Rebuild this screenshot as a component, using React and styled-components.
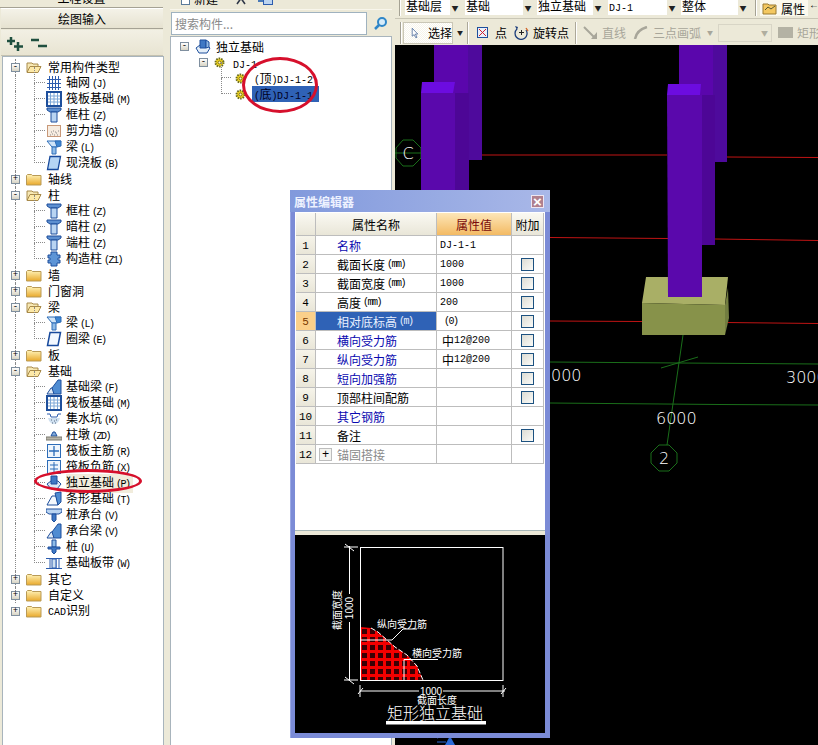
import React from "react";
import styled, { createGlobalStyle } from "styled-components";

const GlobalStyle = createGlobalStyle`
  html, body { margin: 0; padding: 0; background: #ece9d8; }
  body { font-family: "Noto Sans CJK SC", "Liberation Sans", sans-serif; font-size: 12px; color: #000; }
`;

const Page = styled.div`
  position: relative;
  display: flex;
  width: 818px;
  height: 745px;
  overflow: hidden;
  background: #ece9d8;
`;

const Mono = styled.span`
  font-family: "Liberation Mono", monospace;
  font-size: 10px;
`;

// bracketed codes like (M) are squeezed tighter than other latin in the original
const Tight = styled(Mono)`
  letter-spacing: -1.5px;
  margin-left: ${(p) => p.$ml ?? 2}px;
  margin-right: 1px;
`;

const Txt = ({ children }) =>
  children.split(/(\s*\([A-Za-z0-9]*\)|[\x00-\x7f]+)/).map((part, i) => {
    if (/^\s*\(/.test(part)) return <Tight key={i}>{part.trim()}</Tight>;
    if (/^[\x00-\x7f]+$/.test(part)) return <Mono key={i}>{part}</Mono>;
    return part;
  });

/* ---------- left panel ---------- */

const LeftPanel = styled.div`
  display: flex;
  flex-direction: column;
  width: 164px;
  margin-right: 6px;
  flex: none;
`;

const StubButton = styled.div`
  height: 8px;
  box-sizing: border-box;
  margin-right: 1px;
  overflow: hidden;
  display: flex;
  justify-content: center;
  align-items: flex-end;
  background: #ece9d8;
  border-bottom: 1px solid #a5a294;
  line-height: 12px;
`;

const StubText = styled.span`
  margin-bottom: 3px;
`;

const NavButton = styled.div`
  height: 21px;
  box-sizing: border-box;
  margin: 0 1px;
  display: flex;
  align-items: center;
  justify-content: center;
  background: linear-gradient(#f4f2e8, #e6e2d0);
  border-top: 1px solid #fff;
  border-bottom: 1px solid #a5a294;
`;

const IconBar = styled.div`
  height: 26px;
  box-sizing: border-box;
  margin: 1px 1px 0 1px;
  display: flex;
  align-items: center;
  gap: 7px;
  padding: 2px 0 0 5px;
  background: linear-gradient(#f2f0e4, #e8e4d2);
  border-bottom: 1px solid #c4c1b0;
`;

const TreeBox = styled.div`
  flex: 1;
  margin-left: 2px;
  padding-top: 2px;
  background: #fff;
  border: 1px solid #a8b4bc;
  border-bottom: none;
`;

const TreeRow = styled.div`
  position: relative;
  height: 16px;
  display: flex;
  align-items: center;
  line-height: 16px;
  white-space: nowrap;
  padding-left: ${(p) => (p.$child ? 43 : 8)}px;

  &::before {
    content: "";
    display: ${(p) => (p.$last ? "none" : "block")};
    position: absolute;
    left: 12px;
    top: 0;
    height: 16px;
    border-left: 1px dotted #8a8a8a;
  }
  &::after {
    content: "";
    display: ${(p) => (p.$child ? "block" : "none")};
    position: absolute;
    left: 31px;
    top: -8px;
    width: 10px;
    height: 15px;
    border-left: 1px dotted #8a8a8a;
    border-bottom: 1px dotted #8a8a8a;
  }
`;

const Expander = styled.span`
  position: relative;
  z-index: 1;
  flex: none;
  width: 9px;
  height: 9px;
  box-sizing: border-box;
  border: 1px solid #7f8f9f;
  background: linear-gradient(#fff, #d8d4c4);
  margin-right: 6px;
  display: flex;
  align-items: center;
  justify-content: center;
  font: 9px/7px "Liberation Mono", monospace;
  color: #000;
`;

const RowLabel = styled.span`
  margin-left: ${(p) => p.$gap || 4}px;
  padding-right: 2px;
  background: ${(p) => (p.$hot ? "#f1ecdc" : "transparent")};
`;

const Folder = ({ open }) => (
  <svg width="16" height="13" viewBox="0 0 16 13" style={{ flex: "none" }}>
    <defs>
      <linearGradient id="fd" x1="0" y1="0" x2="0" y2="1">
        <stop offset="0" stopColor="#fff3b8" />
        <stop offset="1" stopColor="#e9a92c" />
      </linearGradient>
    </defs>
    {open ? (
      <>
        <path d="M1 11V2h5l1 1h5v2" fill="#f7e8b4" stroke="#a88a4a" />
        <path d="M1 11.5L4 5.5h11l-3 6z" fill="#fde9a8" stroke="#a88a4a" />
      </>
    ) : (
      <path d="M.5 12V2.5l1-1h4l1 1h8.500v9.500z" fill="url(#fd)" stroke="#b99a56" />
    )}
  </svg>
);

const paths = {
  grid: (
    <g stroke="#2c5cae" fill="none">
      <path d="M3.500 1v14M6.500 1v14M9.500 1v14M12.500 1v14M1 4.500h14M1 8.500h14M1 12.500h14" />
    </g>
  ),
  raft: (
    <g fill="none" stroke="#1e4f9c">
      <rect x="1" y="1" width="14" height="14" strokeWidth="2" />
      <path d="M4.500 2v12M8 2v12M11.500 2v12M2 5h12M2 8h12M2 11h12" stroke="#7fa8d8" />
    </g>
  ),
  col: (
    <g stroke="#1e4f9c">
      <path d="M1 1h14v2l-3 2H4L1 3z" fill="#5d8fd0" />
      <path d="M5 5h6v10H5z" fill="#b9d4f2" />
    </g>
  ),
  wall: (
    <g>
      <rect x="1.500" y="2.500" width="13" height="11" fill="#f7ece0" stroke="#c89878" />
      <path d="M4 12h1M6 11h1M8 12h1M10 10h1M5 9h1M7 8h1M9 9h1M11 12h1M12 8h1" stroke="#8a8a8a" />
    </g>
  ),
  beam: (
    <g stroke="#2c6cb8">
      <path d="M1 2h14l-4 6H6z" fill="#cfe4f8" />
      <path d="M6 8h4v7H6z" fill="#8fbce8" />
      <path d="M9 2l6 0v5l-4 1z" fill="#3f86d0" />
    </g>
  ),
  slab: <path d="M4 1.500h10.500L12 14.500H1.500z" fill="#b5d4f4" stroke="#17499c" strokeWidth="1.300" />,
  ring: <path d="M4 1.500h10.500L12 14.500H1.500z" fill="#f2f8ff" stroke="#17499c" strokeWidth="1.500" />,
  cons: (
    <path
      d="M5 1h6v3h3v3h-2v2h2v3h-3v3H5v-3H2V9h2V7H2V4h3z"
      fill="#5d94d6"
      stroke="#1e4f9c"
    />
  ),
  fbeam: (
    <g stroke="#1e4f9c">
      <path d="M1 15l4-6h3v6z" fill="#dfeaf6" />
      <path d="M6 9l6-8h3v14H8z" fill="#4f8cd2" />
    </g>
  ),
  pit: (
    <g>
      <path d="M1 3l3 0 1 3h6l1-3 3 0" fill="none" stroke="#2c5cae" />
      <path d="M2 7c2 8 10 8 12 0z" fill="#cfe0f0" />
      <path d="M5 9h1M8 10h1M10 9h1M6 12h1M9 12h1" stroke="#5a6a80" />
    </g>
  ),
  pier: (
    <g>
      <path d="M5 9l2-4h2l2 4z" fill="#7fa8d8" stroke="#1e4f9c" />
      <rect x="0" y="10" width="16" height="3" fill="#b8b4a8" stroke="#7a7a70" />
    </g>
  ),
  main: (
    <g fill="none" stroke="#2c6cb8">
      <rect x="1.500" y="1.500" width="13" height="13" fill="#eef5fc" />
      <path d="M8 3v10M3 8h10" strokeWidth="1.300" />
    </g>
  ),
  neg: (
    <g fill="none" stroke="#2c6cb8">
      <rect x="1.500" y="1.500" width="13" height="13" fill="#eef5fc" />
      <path d="M8 3v10M4 6h8M4 10h8" />
    </g>
  ),
  iso: (
    <g stroke="#1e4f9c">
      <path d="M1 9l4-3h7l3 3-4 5H5z" fill="#dbe8f6" />
      <path d="M5 1h6v8H5z" fill="#3f78c4" />
    </g>
  ),
  strip: (
    <g stroke="#1e4f9c">
      <path d="M1 14l5-9h4l2 9z" fill="#f4f8fc" />
      <path d="M9 2l6-1v10l-3 3z" fill="#4f8cd2" />
    </g>
  ),
  cap: (
    <g stroke="#1e4f9c">
      <path d="M0 2h16v3l-3 2H3L0 5z" fill="#b9d4f2" />
      <path d="M6 7h4v6l-2 2-2-2z" fill="#3f78c4" />
    </g>
  ),
  pile: (
    <g stroke="#1e4f9c">
      <path d="M6 1h4v7H6z" fill="#8fbce8" />
      <path d="M2 8h12v2H10v3l-2 2-2-2v-3H2z" fill="#3f78c4" />
    </g>
  ),
  band: (
    <g stroke="#2c5cae" fill="none">
      <path d="M0 3.500h16M0 13.500h16" />
      <path d="M4 4v9M7 4v9M10 4v9M13 4v9" />
      <rect x="6" y="4" width="4" height="9" fill="#cfe0f0" />
    </g>
  ),
};

const CompIcon = ({ kind }) => (
  <svg width="16" height="16" viewBox="0 0 16 16" style={{ flex: "none" }}>
    {paths[kind]}
  </svg>
);

const tree = [
  { t: "常用构件类型", open: true },
  { t: "轴网 (J)", k: "grid" },
  { t: "筏板基础 (M)", k: "raft" },
  { t: "框柱 (Z)", k: "col" },
  { t: "剪力墙 (Q)", k: "wall" },
  { t: "梁 (L)", k: "beam" },
  { t: "现浇板 (B)", k: "slab" },
  { t: "轴线" },
  { t: "柱", open: true },
  { t: "框柱 (Z)", k: "col" },
  { t: "暗柱 (Z)", k: "col" },
  { t: "端柱 (Z)", k: "col" },
  { t: "构造柱 (Z1)", k: "cons" },
  { t: "墙" },
  { t: "门窗洞" },
  { t: "梁", open: true },
  { t: "梁 (L)", k: "beam" },
  { t: "圈梁 (E)", k: "ring" },
  { t: "板" },
  { t: "基础", open: true },
  { t: "基础梁 (F)", k: "fbeam" },
  { t: "筏板基础 (M)", k: "raft" },
  { t: "集水坑 (K)", k: "pit" },
  { t: "柱墩 (ZD)", k: "pier" },
  { t: "筏板主筋 (R)", k: "main" },
  { t: "筏板负筋 (X)", k: "neg" },
  { t: "独立基础 (P)", k: "iso", hot: true },
  { t: "条形基础 (T)", k: "strip" },
  { t: "桩承台 (V)", k: "cap" },
  { t: "承台梁 (V)", k: "fbeam" },
  { t: "桩 (U)", k: "pile" },
  { t: "基础板带 (W)", k: "band" },
  { t: "其它" },
  { t: "自定义" },
  { t: "CAD识别" },
];

const PlusMinus = ({ plus }) => (
  <svg width="17" height="16" viewBox="0 0 17 16">
    {plus ? (
      <path d="M5 1v8M1 5h8M12 6v9M8 10.500h9" stroke="#1f4f3f" strokeWidth="2.500" />
    ) : (
      <path d="M1 4h8M8 10h9" stroke="#1f4f3f" strokeWidth="2.500" />
    )}
  </svg>
);

/* ---------- middle panel ---------- */

const MidPanel = styled.div`
  display: flex;
  flex-direction: column;
  width: 222px;
  margin-right: 3px;
  flex: none;
`;

const MidTop = styled.div`
  height: 10px;
  box-sizing: border-box;
  overflow: hidden;
  display: flex;
  align-items: flex-end;
  padding: 0 0 4px 11px;
  line-height: 12px;
  border-bottom: 1px solid #f8f6ec;
`;

const MidTool = styled.span`
  display: flex;
  align-items: flex-end;
  gap: 4px;
  margin-left: ${(p) => p.$ml ?? 0}px;
`;

const SearchRow = styled.div`
  height: 26px;
  display: flex;
  align-items: center;
  gap: 5px;
  padding-left: 1px;
`;

const SearchInput = styled.div`
  width: 196px;
  height: 23px;
  box-sizing: border-box;
  padding-left: 3px;
  background: #fff;
  border: 1px solid #9fb2bf;
  color: #8a8a8a;
  line-height: 21px;
`;

const SearchButton = styled.div`
  width: 17px;
  height: 23px;
  display: flex;
  align-items: center;
  justify-content: center;
`;

const MidTree = styled.div`
  flex: 1;
  padding-top: 1px;
  background: #fff;
  border: 1px solid #a8b4bc;
  border-bottom: none;
`;

const MidRow = styled.div`
  position: relative;
  height: 16px;
  display: flex;
  align-items: center;
  white-space: nowrap;
  padding-left: ${(p) => p.$indent}px;
`;

const Selected = styled.span`
  background: ${(p) => (p.$on ? "#2f62b6" : "transparent")};
  color: ${(p) => (p.$on ? "#000020" : "#000")};
  margin-left: 6px;
  padding: 0 2px;
  height: 16px;
  line-height: 16px;
  width: 63px;
`;

const Gear = () => (
  <svg width="11" height="11" viewBox="0 0 11 11" style={{ flex: "none" }}>
    <circle cx="5.500" cy="5.500" r="4" fill="#f4d820" stroke="#6a6a20" strokeDasharray="1.500 1" strokeWidth="2" />
    <circle cx="5.500" cy="5.500" r="1.500" fill="#fff8c0" stroke="#7a6a10" />
  </svg>
);

const dotted = "1px dotted #8a8a8a";

const Guide = styled.span`
  position: absolute;
  left: ${(p) => p.$left}px;
  top: -8px;
  width: 9px;
  height: 15px;
  border-left: ${dotted};
  border-bottom: ${dotted};
`;

/* ---------- main viewport ---------- */

const Viewport = styled.div`
  flex: 1;
  display: flex;
  flex-direction: column;
  min-width: 0;
`;

const TopBar = styled.div`
  height: 19px;
  box-sizing: border-box;
  display: flex;
  align-items: flex-start;
  overflow: hidden;
  padding-left: 4px;
  border-bottom: 1px solid #c9c6b6;
  white-space: nowrap;
`;

const Combo = styled.div`
  flex: none;
  display: flex;
  width: ${(p) => p.$w}px;
  height: 15px;
  margin-right: ${(p) => p.$gap}px;
  background: #fff;
  line-height: 12px;
`;

const ComboText = styled.div`
  flex: 1;
  padding-left: 1px;
`;

const ComboArrow = styled.div`
  width: 10px;
  display: flex;
  align-items: center;
  justify-content: center;
  background: #ece9d8;
  color: #222;
  font-size: 7px;
`;

const Grip = styled.div`
  flex: none;
  box-sizing: border-box;
  width: 2px;
  height: ${(p) => p.$h || 16}px;
  margin-right: ${(p) => p.$r}px;
  border-left: 1px solid #a5a294;
  border-right: 1px solid #fff;
`;

const PropButton = styled.div`
  flex: none;
  display: flex;
  align-items: center;
  gap: 3px;
  height: 16px;
  padding-left: 2px;
  width: 48px;
  box-sizing: border-box;
  background: #fbf9ee;
  margin-right: 3px;
`;

const ToolBar = styled.div`
  height: 25px;
  box-sizing: border-box;
  margin-top: 1px;
  display: flex;
  align-items: center;
  padding-left: 5px;
  white-space: nowrap;
  overflow: hidden;
`;

const ToolChecked = styled.div`
  flex: none;
  width: 50px;
  height: 22px;
  padding-left: 7px;
  display: flex;
  align-items: center;
  gap: 9px;
  box-sizing: border-box;
  background: repeating-conic-gradient(#f6f4ea 0 25%, #ffffff 0 50%) 0 0 / 2px 2px;
  border: 1px solid #c9c6b6;
`;

const Tool = styled.div`
  flex: none;
  display: flex;
  align-items: center;
  gap: ${(p) => p.$gap ?? 4}px;
  margin-left: ${(p) => p.$ml ?? 0}px;
  color: ${(p) => (p.$off ? "#a8a69a" : "#000")};
`;

const Drop = styled.span`
  flex: none;
  width: 5px;
  overflow: visible;
  font-size: 6px;
  margin-left: ${(p) => p.$ml ?? 4}px;
  color: ${(p) => (p.$off ? "#a8a69a" : "#222")};
`;

const Sep = styled.div`
  flex: none;
  width: 1px;
  height: 22px;
  margin-left: ${(p) => p.$ml}px;
  background: #aca899;
  border-right: 1px solid #fff;
`;

const OffCombo = styled.div`
  flex: none;
  width: 54px;
  height: 18px;
  margin-left: 6px;
  box-sizing: border-box;
  display: flex;
  align-items: center;
  justify-content: flex-end;
  padding-right: 3px;
  border: 1px solid #d8d5c6;
  color: #b0ae9f;
  font-size: 7px;
`;

const Canvas = styled.div`
  flex: 1;
  background: #000;
  overflow: hidden;
`;

const cad = {
  fontFamily: '"DejaVu Sans", sans-serif',
  fontWeight: 200,
  fill: "#fff",
};

const Model = () => (
  <svg width="423" height="700" viewBox="395 45 423 700" style={{ display: "block" }}>
    {/* red axis lines */}
    <g stroke="#c01414" strokeWidth="1" fill="none">
      <path d="M481 155L667 155M727 157L818 157.500" />
      <path d="M550 237.500L668 238.500M715 239L818 240.500" />
      <path d="M550 321L642 321.500M725 322.500L818 323.500" />
    </g>
    {/* green axis lines */}
    <g stroke="#1a6e1a" strokeWidth="1" fill="none">
      <path d="M550 362L680 363L818 364" />
      <path d="M550 403L720 404.500L818 405" />
      <path d="M683 335L667 445" />
      <path d="M661 368L698 357" />
      <path d="M395 153L421 153" />
      <polygon points="396,148 403,140 413,140 421,148 421,158 413,166 403,166 396,158" />
      <polygon points="651,453 659,445 669,445 677,453 677,463 669,471 659,471 651,463" />
    </g>
    {/* left column group */}
    <path d="M434 45H468V160H434z" fill="#5a06ac" />
    <path d="M468 45H482V160H468z" fill="#4e0a9c" />
    <path d="M455 93H469V200H455z" fill="#4d0696" />
    <path d="M421 93H455V200H421z" fill="#5a08ac" />
    <path d="M422 82H455L453 93H421z" fill="#6c0ce0" />
    {/* right column group */}
    <path d="M679 45H713V162H679z" fill="#5a06ac" />
    <path d="M713 45H727V162H713z" fill="#4e0a9c" />
    <path d="M701 95H715V245H701z" fill="#4d0696" />
    {/* footing */}
    <path d="M646 277H728L725 305L642 303z" fill="#a9af66" />
    <path d="M642 303L725 305V335H642z" fill="#87924a" />
    <path d="M725 305L728 288L729 318L725 335z" fill="#727d40" />
    <path d="M667 95H702V297H668z" fill="#5a08ac" />
    <path d="M668 84H701L700 95H667z" fill="#6c0ce0" />
    {/* CAD labels */}
    <g {...cad} fontSize="16">
      <text x="551" y="381">000</text>
      <text x="786" y="383">3000</text>
      <text x="656" y="424">6000</text>
      <text x="664" y="464" textAnchor="middle">2</text>
      <text x="408" y="159" textAnchor="middle">C</text>
    </g>
    {/* arrow poking out under the dialog */}
    <path d="M437 738L447 735M437 742H446" stroke="#2a6ad8" fill="none" />
    <path d="M450 736L455 745H445z" fill="#2a6ad8" />
  </svg>
);

/* ---------- floating dialog ---------- */

const Dialog = styled.div`
  position: absolute;
  left: 290px;
  top: 190px;
  width: 260px;
  height: 548px;
  box-sizing: border-box;
  padding: 0 5px 5px;
  display: flex;
  flex-direction: column;
  background: #7b8bd6;
  box-shadow: inset 0 1px 0 #a9b6ec, inset 1px 0 0 #9aa8e4;
`;

const TitleBar = styled.div`
  height: 22px;
  flex: none;
  display: flex;
  align-items: center;
  justify-content: space-between;
  margin: 0 -5px;
  padding: 0 6px 0 4px;
  background: linear-gradient(90deg, #8199dc, #a9b8e8);
  color: #eef2ff;
  font-weight: 700;
  font-size: 12px;
`;

const CloseBox = styled.div`
  width: 13px;
  height: 13px;
  box-sizing: border-box;
  display: flex;
  align-items: center;
  justify-content: center;
  background: #b0808e;
  border: 1px solid #eee6f2;
  color: #fff;
  font: 700 15px/1 "Liberation Sans", sans-serif;
`;

const DialogBody = styled.div`
  flex: 1;
  background: #fff;
  padding: 1px 0 0 1px;
`;

const PropGrid = styled.div`
  display: grid;
  grid-template-columns: 20px 121px 75px 32px;
  grid-template-rows: 23px repeat(12, 19px);
  width: 248px;
`;

const Cell = styled.div`
  box-sizing: border-box;
  display: flex;
  align-items: center;
  padding-top: 1px;
  border-right: 1px solid #bdbdbd;
  border-bottom: 1px solid #bdbdbd;
  white-space: nowrap;
  overflow: hidden;
`;

const HeadCell = styled(Cell)`
  justify-content: center;
  font-size: 12px;
  background: ${(p) =>
    p.$hot ? "linear-gradient(#fde6b8, #f3ba63)" : "linear-gradient(#faf9f2, #e9e6d8)"};
  color: ${(p) => (p.$hot ? "#7a0a0a" : "#000")};
`;

const NumCell = styled(Cell)`
  justify-content: center;
  font-family: "Liberation Mono", monospace;
  font-size: 11px;
  background: ${(p) => (p.$on ? "#fbd08a" : "linear-gradient(#f6f4ea, #e9e6d8)")};
  color: ${(p) => (p.$on ? "#7a3a00" : "#000")};
`;

const NameCell = styled(Cell)`
  padding-left: ${(p) => (p.$expand ? 3 : 21)}px;
  background: ${(p) => (p.$on ? "#2f62b6" : "#fff")};
  color: ${(p) => (p.$on ? "#e8f0ff" : p.$tone === "link" ? "#0a0ab0" : p.$tone === "off" ? "#8a8a8a" : "#000")};
`;

const ValueCell = styled(Cell)`
  padding-left: ${(p) => p.$pad ?? 3}px;
`;

const CheckCell = styled(Cell)`
  justify-content: center;
`;

const Check = styled.span`
  width: 13px;
  height: 13px;
  box-sizing: border-box;
  border: 1px solid #1c5180;
  background: linear-gradient(135deg, #dcdcd4, #fbfbf8);
`;

const ExpandBox = styled.span`
  width: 13px;
  height: 13px;
  margin-right: 5px;
  box-sizing: border-box;
  border: 1px solid #bdbdbd;
  background: #f4f4f0;
  display: flex;
  align-items: center;
  justify-content: center;
  font: 12px/1 "Liberation Mono", monospace;
  color: #000;
`;

const Splitter = styled.div`
  height: 5px;
  flex: none;
  background: #ece9d8;
  border-top: 1px solid #a8b8b8;
  box-sizing: border-box;
`;

const Preview = styled.div`
  height: 198px;
  flex: none;
  background: #000;
`;

const props = [
  { n: "名称", v: "DJ-1-1", tone: "link", noCheck: true },
  { n: "截面长度 (mm)", v: "1000" },
  { n: "截面宽度 (mm)", v: "1000" },
  { n: "高度 (mm)", v: "200" },
  { n: "相对底标高 (m)", v: "(0)", on: true, pad: 5 },
  { n: "横向受力筋", v: "中12@200", tone: "link", pad: 5 },
  { n: "纵向受力筋", v: "中12@200", tone: "link", pad: 5 },
  { n: "短向加强筋", tone: "link" },
  { n: "顶部柱间配筋" },
  { n: "其它钢筋", tone: "link", noCheck: true },
  { n: "备注" },
  { n: "锚固搭接", tone: "off", noCheck: true, expand: true },
];

const Drawing = () => (
  <svg width="250" height="198" viewBox="295 535 250 198" style={{ display: "block" }}>
    <defs>
      <pattern id="rebar" x="360" y="627" width="8" height="8" patternUnits="userSpaceOnUse">
        <rect width="8" height="8" fill="#f40000" />
        <rect x="2" y="2" width="5" height="5" fill="#3a0004" />
      </pattern>
    </defs>
    <path d="M360 627L371 628L378 632L395 647L407 655L417 666L423 680H360z" fill="url(#rebar)" />
    <g stroke="#fff" fill="none">
      <path d="M371 628L378 632L395 647L407 655L417 666L423 680" strokeDasharray="5 2" />
      <rect x="360.500" y="547.500" width="142.500" height="133" />
      <path d="M344 547H358M344 680H358" />
      <path d="M349.500 546V594M349.500 622V681" />
      <path d="M345 544L354 551M345 677L354 684" />
      <path d="M360 691H419M443 691H505" />
      <path d="M360 685V697M503 685V697" />
      <path d="M358 694L363 688M501 694L506 688" />
      <path d="M360 640H392L403 629H417" />
      <path d="M404 680V659.500H438" />
    </g>
    <rect x="386" y="721" width="100" height="3.500" fill="#fff" />
    <g fill="#fff" fontFamily='"Noto Sans CJK SC", sans-serif' fontSize="10">
      <text x="377" y="628">纵向受力筋</text>
      <text x="412" y="657">横向受力筋</text>
      <text x="437" y="704" textAnchor="middle">截面长度</text>
      <text transform="translate(341 610) rotate(-90)" textAnchor="middle">截面宽度</text>
    </g>
    <g fill="#fff" fontFamily='"Liberation Sans", sans-serif' fontSize="10">
      <text x="431" y="695" textAnchor="middle">1000</text>
      <text transform="translate(353 608) rotate(-90)" textAnchor="middle">1000</text>
    </g>
    <text x="435" y="719" textAnchor="middle" fill="#fff" fontFamily='"Noto Sans CJK SC", sans-serif' fontWeight="300" fontSize="16">
      矩形独立基础
    </text>
  </svg>
);

/* ---------- overlays ---------- */

const RedRing = styled.div`
  position: absolute;
  left: ${(p) => p.$x}px;
  top: ${(p) => p.$y}px;
  width: ${(p) => p.$w}px;
  height: ${(p) => p.$h}px;
  box-sizing: border-box;
  border: 3px solid #d6102c;
  border-radius: 50%;
  pointer-events: none;
`;

/* ---------- toolbar icons ---------- */

const CursorIcon = () => (
  <svg width="10" height="14" viewBox="0 0 10 14">
    <path d="M1.500 1v10l2.500-2 2 4 1.500-.7-2-4h3z" fill="#fff" stroke="#4a6a9a" />
  </svg>
);
const PointIcon = () => (
  <svg width="11" height="11" viewBox="0 0 11 11">
    <rect x=".5" y=".5" width="10" height="10" fill="#e8f0fa" stroke="#1e4f9c" />
    <path d="M2 2l7 7M9 2l-7 7" stroke="#d02030" />
  </svg>
);
const RotateIcon = () => (
  <svg width="15" height="15" viewBox="0 0 15 15">
    <path d="M3 4a6 6 0 1 0 9 1" fill="none" stroke="#1e3f7c" strokeWidth="1.300" />
    <path d="M1 1l3 1-1 3z" fill="#1e3f7c" />
    <path d="M7.500 5v5M5 7.500h5" stroke="#222" />
    <path d="M12 3l2 3" stroke="#d06020" strokeWidth="1.300" />
  </svg>
);
const LineIcon = () => (
  <svg width="15" height="13" viewBox="0 0 15 13">
    <path d="M1 1l10 10" stroke="#a8a69a" strokeWidth="2" />
    <path d="M14 6v7H8z" fill="#a8a69a" />
  </svg>
);
const ArcIcon = () => (
  <svg width="15" height="13" viewBox="0 0 15 13">
    <path d="M2 13C3 7 7 3 14 1" fill="none" stroke="#a8a69a" strokeWidth="2.500" />
  </svg>
);
const AttrIcon = () => (
  <svg width="16" height="14" viewBox="0 0 16 14">
    <path d="M1 13V3h5l1 1h7v9z" fill="#f4c860" stroke="#9a7a30" />
    <path d="M3 9l3-3 3 2 4-3" stroke="#5a5a30" fill="none" />
  </svg>
);
const GlassIcon = () => (
  <svg width="15" height="15" viewBox="0 0 15 15">
    <circle cx="9" cy="6" r="4" fill="#d6ecfa" stroke="#2e86c8" strokeWidth="2" />
    <path d="M6 9l-4 4" stroke="#2e86c8" strokeWidth="2.500" />
  </svg>
);
const NewIcon = () => (
  <svg width="9" height="12" viewBox="0 0 9 12">
    <rect x=".5" y=".5" width="8" height="11" fill="#fff" stroke="#5a7a9a" />
  </svg>
);
const KnifeIcon = () => (
  <svg width="10" height="12" viewBox="0 0 10 12">
    <path d="M1 11L8 1M9 11L2 1" stroke="#303848" strokeWidth="1.600" />
  </svg>
);
const SaveIcon = () => (
  <svg width="15" height="12" viewBox="0 0 15 12">
    <path d="M0 8h6" stroke="#4a7ab8" strokeWidth="2" />
    <rect x="5.500" y=".5" width="9" height="11" fill="#bcd4f0" stroke="#2c5cae" />
  </svg>
);
const BaseIcon = () => (
  <svg width="16" height="15" viewBox="0 0 16 15">
    <path d="M1 9l4-3h7l3 3-3 5H4z" fill="#e4eef8" stroke="#1e4f9c" />
    <path d="M5 1h6v8H5z" fill="#3f78c4" stroke="#1e4f9c" />
    <path d="M11 1l3 2v5l-3 1z" fill="#8fb8e4" stroke="#1e4f9c" />
  </svg>
);

export default function App() {
  return (
    <Page>
      <GlobalStyle />
      <LeftPanel>
        <StubButton><StubText>工程设置</StubText></StubButton>
        <NavButton>绘图输入</NavButton>
        <IconBar>
          <PlusMinus plus />
          <PlusMinus />
        </IconBar>
        <TreeBox>
          {tree.map((row, i) =>
            row.k ? (
              <TreeRow key={i} $child>
                <CompIcon kind={row.k} />
                <RowLabel $hot={row.hot}><Txt>{row.t}</Txt></RowLabel>
              </TreeRow>
            ) : (
              <TreeRow key={i} $last={i === tree.length - 1}>
                <Expander>{row.open ? "-" : "+"}</Expander>
                <Folder open={row.open} />
                <RowLabel $gap={6}><Txt>{row.t}</Txt></RowLabel>
              </TreeRow>
            )
          )}
        </TreeBox>
      </LeftPanel>

      <MidPanel>
        <MidTop>
          <MidTool><NewIcon />新建</MidTool>
          <MidTool $ml={18}><KnifeIcon /></MidTool>
          <MidTool $ml={12}><SaveIcon /></MidTool>
        </MidTop>
        <SearchRow>
          <SearchInput>搜索构件...</SearchInput>
          <SearchButton><GlassIcon /></SearchButton>
        </SearchRow>
        <MidTree>
          <MidRow $indent={9}>
            <Expander>-</Expander>
            <BaseIcon />
            <RowLabel $gap={5}>独立基础</RowLabel>
          </MidRow>
          <MidRow $indent={28}>
            <Expander>-</Expander>
            <Gear />
            <RowLabel $gap={8}><Txt>DJ-1</Txt></RowLabel>
          </MidRow>
          <MidRow $indent={64}>
            <Guide $left={50} />
            <Gear />
            <Selected><Tight $ml={0}>(</Tight>顶<Tight $ml={0}>)</Tight><Mono>DJ-1-2</Mono></Selected>
          </MidRow>
          <MidRow $indent={64}>
            <Guide $left={50} />
            <Gear />
            <Selected $on><Tight $ml={0}>(</Tight>底<Tight $ml={0}>)</Tight><Mono>DJ-1-1</Mono></Selected>
          </MidRow>
        </MidTree>
      </MidPanel>

      <Viewport>
        <TopBar>
          <Grip $r={4} />
          <Combo $w={55} $gap={5}><ComboText>基础层</ComboText><ComboArrow>▼</ComboArrow></Combo>
          <Combo $w={68} $gap={4}><ComboText>基础</ComboText><ComboArrow>▼</ComboArrow></Combo>
          <Combo $w={66} $gap={5}><ComboText>独立基础</ComboText><ComboArrow>▼</ComboArrow></Combo>
          <Combo $w={69} $gap={4}><ComboText><Mono>DJ-1</Mono></ComboText><ComboArrow>▼</ComboArrow></Combo>
          <Combo $w={67} $gap={7}><ComboText>整体</ComboText><ComboArrow>▼</ComboArrow></Combo>
          <Grip $r={3} />
          <PropButton><AttrIcon />属性</PropButton>
          <Mono>←</Mono>
        </TopBar>
        <ToolBar>
          <Grip $h={22} $r={1} />
          <ToolChecked><CursorIcon />选择</ToolChecked>
          <Drop>▼</Drop>
          <Sep $ml={5} />
          <Tool $ml={8} $gap={7}><PointIcon />点</Tool>
          <Tool $ml={7} $gap={4}><RotateIcon />旋转点</Tool>
          <Sep $ml={6} />
          <Tool $ml={6} $off><LineIcon />直线</Tool>
          <Tool $ml={7} $off $gap={5}><ArcIcon />三点画弧</Tool>
          <Drop $off $ml={6}>▼</Drop>
          <OffCombo>▼</OffCombo>
          <Tool $ml={6} $off $gap={4}>
            <svg width="15" height="11"><rect width="15" height="11" fill="#b4b2a4" /></svg>
            矩形
          </Tool>
        </ToolBar>
        <Canvas><Model /></Canvas>
      </Viewport>

      <Dialog>
        <TitleBar>属性编辑器<CloseBox>×</CloseBox></TitleBar>
        <DialogBody>
          <PropGrid>
            <HeadCell />
            <HeadCell>属性名称</HeadCell>
            <HeadCell $hot>属性值</HeadCell>
            <HeadCell>附加</HeadCell>
            {props.map((p, i) => (
              <React.Fragment key={p.n}>
                <NumCell $on={p.on}>{i + 1}</NumCell>
                <NameCell $on={p.on} $tone={p.tone} $expand={p.expand}>
                  {p.expand && <ExpandBox>+</ExpandBox>}
                  <Txt>{p.n}</Txt>
                </NameCell>
                <ValueCell $pad={p.pad}>{p.v && <Txt>{p.v}</Txt>}</ValueCell>
                <CheckCell>{!p.noCheck && <Check />}</CheckCell>
              </React.Fragment>
            ))}
          </PropGrid>
        </DialogBody>
        <Splitter />
        <Preview><Drawing /></Preview>
      </Dialog>

      <RedRing $x={34} $y={469} $w={108} $h={24} />
      <RedRing $x={242} $y={57} $w={76} $h={56} />
    </Page>
  );
}
